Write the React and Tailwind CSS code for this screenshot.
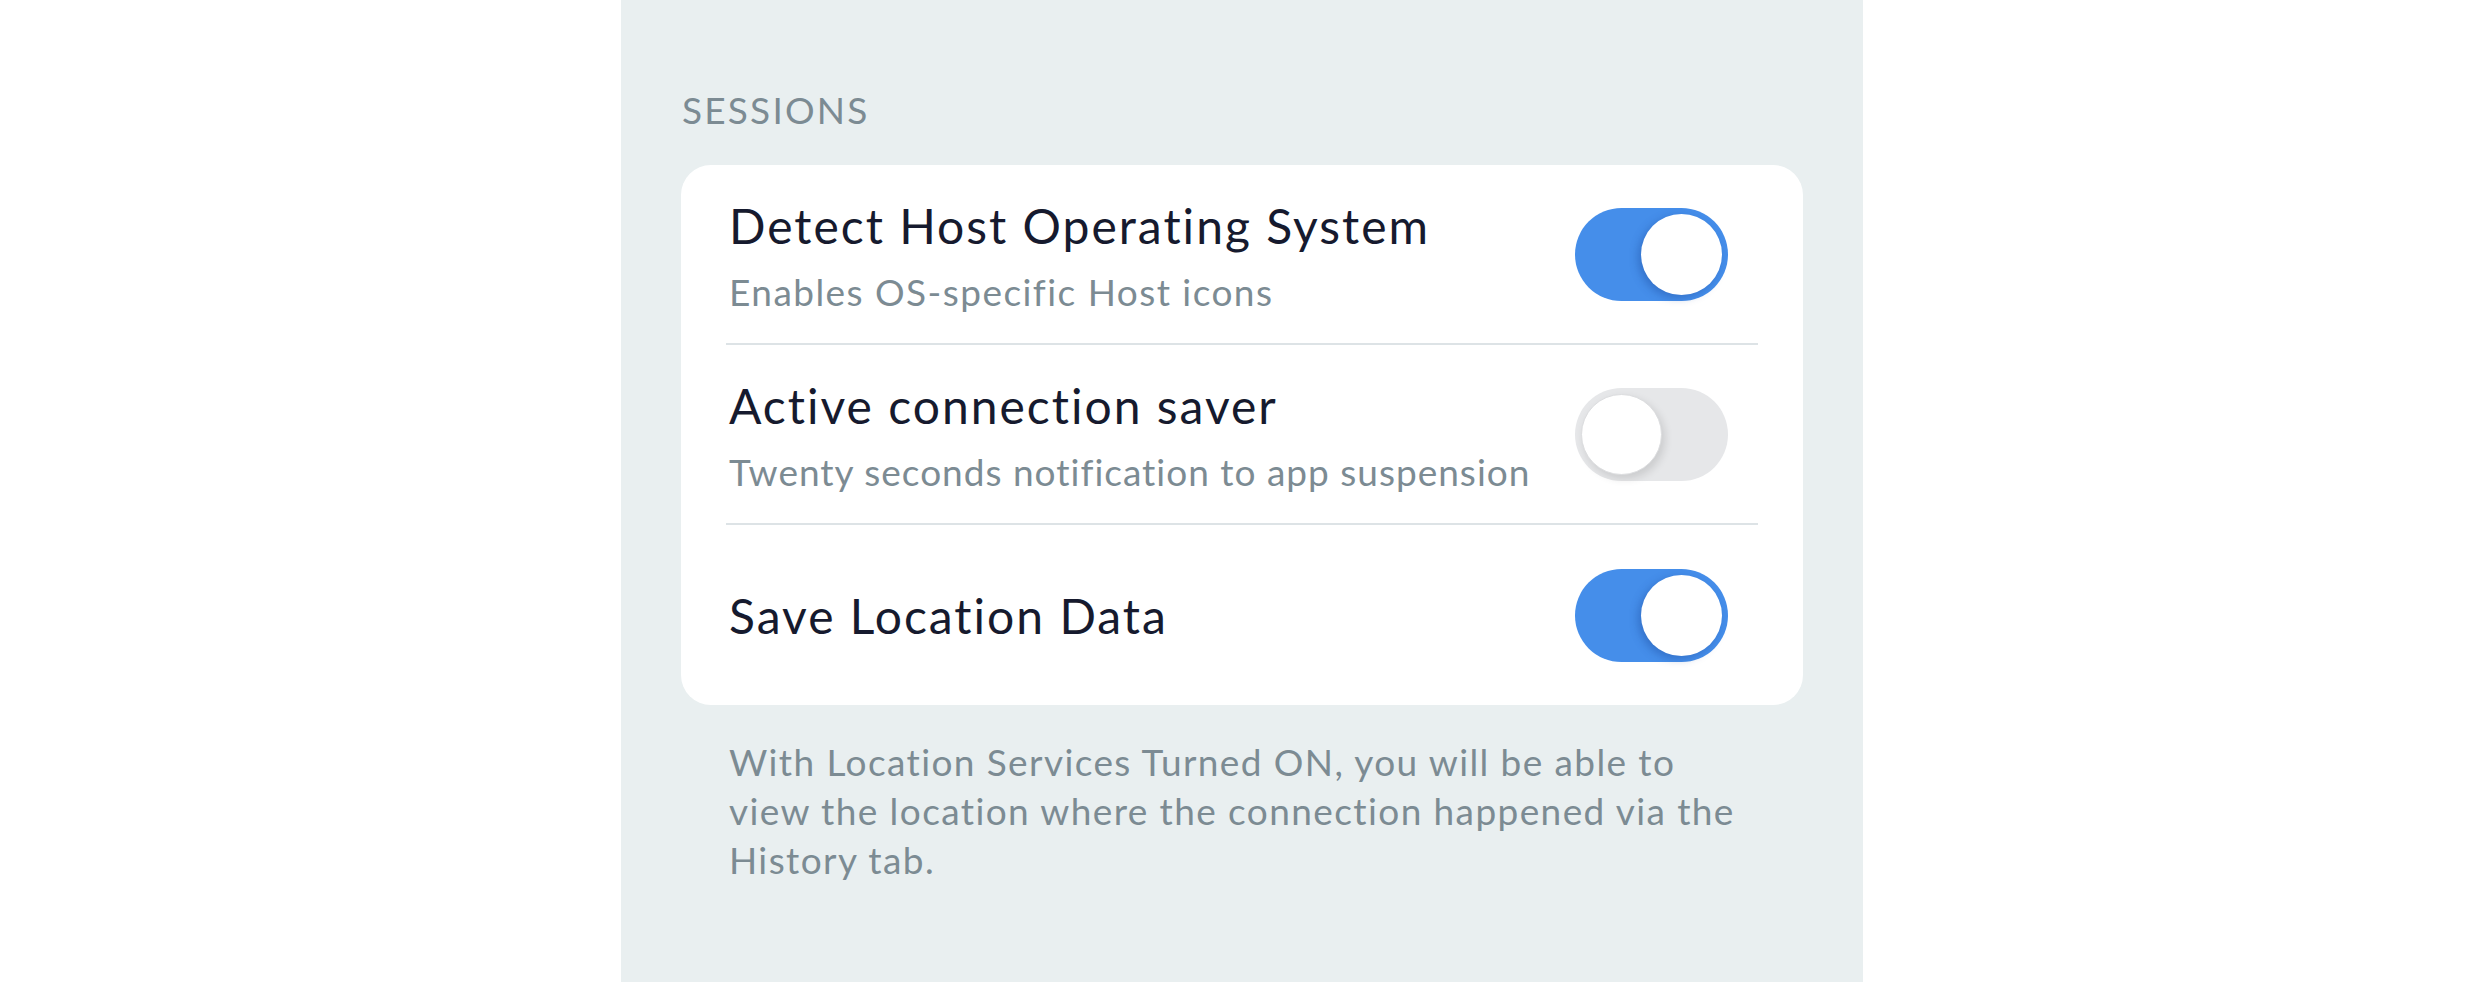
import React from "react";

const font = { fontFamily: "Lato, 'Noto Sans', sans-serif" };

function Toggle({ on }) {
  return on ? (
    <div className="flex h-[93px] w-[153px] shrink-0 items-center justify-end rounded-full bg-[#458eea] p-[6px]">
      <div className="h-[81px] w-[81px] rounded-full bg-white shadow-[-3px_3px_8px_rgba(20,60,140,0.35)]" />
    </div>
  ) : (
    <div className="flex h-[93px] w-[153px] shrink-0 items-center justify-start rounded-full bg-[#e6e7e9] p-[6px]">
      <div className="h-[81px] w-[81px] rounded-full border border-[#dcdddf] bg-white shadow-[3px_4px_8px_rgba(0,0,0,0.12)]" />
    </div>
  );
}

function Row({ title, subtitle, subClass, on, last }) {
  return (
    <div
      className={
        "flex h-[180px] items-center justify-between pr-[30px] " +
        (last ? "" : "border-b-[2px] border-[#dde3e6]")
      }
    >
      <div className={"pl-[3px] " + (subtitle ? "pt-[10px]" : "pt-[2px]")}>
        <div className="text-[48px] leading-[60px] tracking-[2px] text-[#161a2e]">{title}</div>
        {subtitle && (
          <div className={"mt-[6px] text-[37px] leading-[60px] text-[#7c8b93] " + subClass}>{subtitle}</div>
        )}
      </div>
      <Toggle on={on} />
    </div>
  );
}

export default function App() {
  return (
    <div className="flex h-[982px] w-full justify-center bg-white" style={font}>
      <div className="flex w-[1242px] flex-col bg-[#e9eff0] px-[60px] pt-[91px]">
        <div className="pl-[1px] text-[37px] leading-[37px] tracking-[2.2px] text-[#7c8b93]">SESSIONS</div>
        <div className="mt-[37px] rounded-[30px] bg-white px-[45px]">
          <Row
            title="Detect Host Operating System"
            subtitle="Enables OS-specific Host icons"
            subClass="tracking-[1.45px]"
            on
          />
          <Row
            title="Active connection saver"
            subtitle="Twenty seconds notification to app suspension"
            subClass="tracking-[1px]"
            on={false}
          />
          <Row title="Save Location Data" on last />
        </div>
        <div className="mt-[32px] pl-[48px] text-[37px] leading-[49px] tracking-[1.4px] text-[#7c8b93]">
          With Location Services Turned ON, you will be able to
          <br />
          view the location where the connection happened via the
          <br />
          History tab.
        </div>
      </div>
    </div>
  );
}
